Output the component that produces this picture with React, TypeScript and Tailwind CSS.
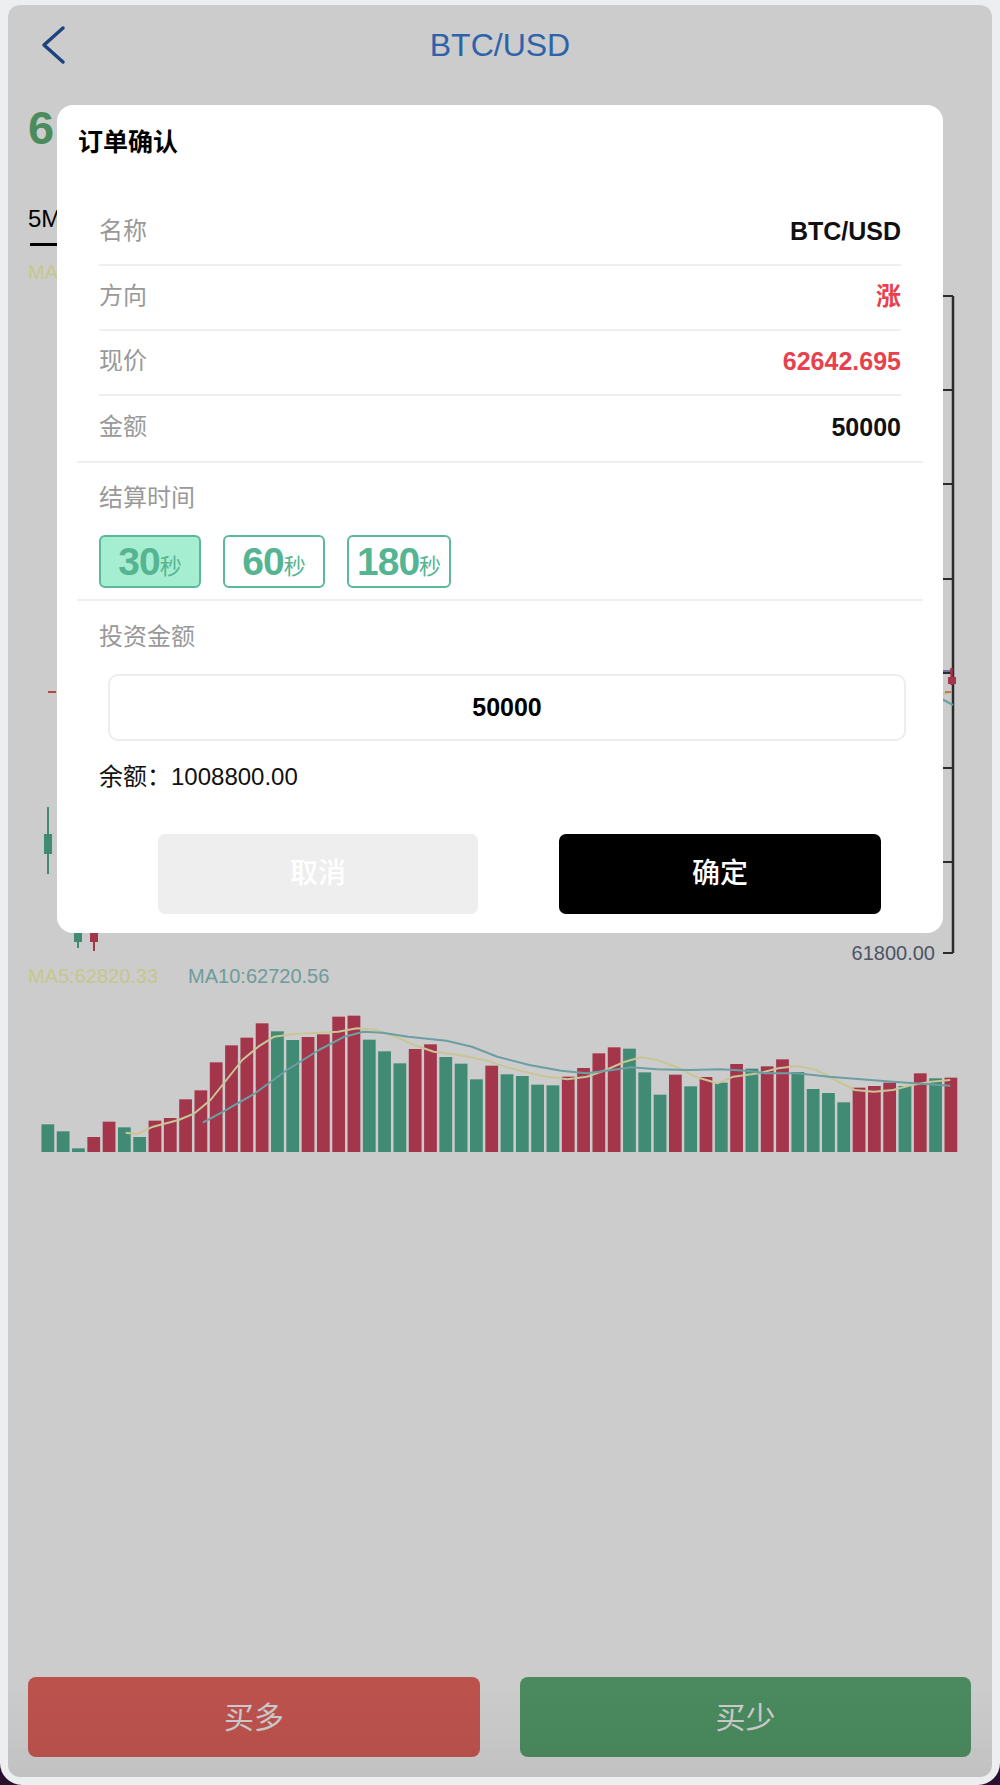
import React from "react";

const font = "font-['Liberation_Sans','Noto_Sans_CJK_SC',sans-serif]";

const RED = "#ce445f";
const GREEN = "#52ad91";

// volume bars: height (in 1/3 px) and colour
const bars: [number, "r" | "g"][] = [
  [83, "g"], [62, "g"], [11, "g"], [45, "r"], [91, "r"], [74, "g"], [45, "g"], [94, "r"], [102, "r"], [158, "r"],
  [185, "r"], [269, "r"], [320, "r"], [343, "r"], [386, "r"], [362, "g"], [336, "g"], [345, "r"], [353, "r"], [406, "r"],
  [409, "r"], [337, "g"], [302, "g"], [266, "g"], [309, "r"], [323, "r"], [285, "g"], [265, "g"], [218, "g"], [259, "r"],
  [233, "g"], [228, "g"], [202, "g"], [200, "g"], [226, "r"], [252, "r"], [296, "r"], [314, "r"], [310, "g"], [239, "g"],
  [172, "g"], [232, "r"], [197, "g"], [225, "r"], [208, "g"], [264, "r"], [250, "g"], [257, "r"], [278, "r"], [240, "g"],
  [189, "g"], [177, "g"], [149, "g"], [193, "r"], [198, "r"], [208, "r"], [198, "g"], [236, "r"], [221, "g"], [223, "r"],
];

const ma5 = [
  [197, 578], [215, 582], [240, 560], [280, 540], [305, 520], [330, 480], [355, 420], [380, 360], [405, 320], [430, 290],
  [460, 282], [500, 278], [530, 275], [560, 265], [590, 270], [620, 290], [650, 315], [680, 335], [720, 345], [760, 360],
  [800, 385], [850, 408], [890, 418], [920, 410], [950, 390], [980, 365], [1005, 352], [1030, 360], [1060, 380], [1090, 410],
  [1125, 430], [1150, 410], [1190, 400], [1220, 385], [1250, 378], [1280, 390], [1310, 420], [1340, 450], [1370, 455],
  [1400, 450], [1430, 435], [1460, 425], [1490, 420],
];

const ma10 = [
  [318, 548], [350, 515], [400, 460], [450, 390], [500, 330], [540, 290], [570, 275], [600, 278], [640, 290], [700, 302],
  [740, 320], [780, 350], [830, 375], [880, 392], [920, 400], [960, 390], [990, 382], [1030, 388], [1080, 390], [1130, 388],
  [1170, 392], [1200, 400], [1250, 400], [1300, 410], [1350, 418], [1400, 425], [1450, 432], [1490, 437],
];

const ticks = [11, 105, 199, 294, 388, 483, 577, 668];
const tickLabels = ["62500.00", "62400.00", "62300.00", "62200.00", "62100.00", "62000.00", "61900.00", "61800.00"];

function toPoints(pts: number[][]) {
  return pts.map(([x, y]) => `${(x / 1.568 - 8).toFixed(1)},${(y / 3 - 50).toFixed(1)}`).join(" ");
}

function CandleChart() {
  return (
    <svg width="984" height="680" className={`block ${font}`}>
      {/* price axis */}
      <line x1="945" y1="11" x2="945" y2="668" stroke="#363636" strokeWidth="2.5" />
      {ticks.map((y, i) => (
        <g key={y}>
          <line x1="935" y1={y} x2="945" y2={y} stroke="#363636" strokeWidth="2" />
          <text x="927" y={y + 7} textAnchor="end" fontSize="20" fill="#606a80">
            {tickLabels[i]}
          </text>
        </g>
      ))}
      {/* candles */}
      <line x1="40" y1="522" x2="40" y2="589" stroke={GREEN} strokeWidth="2" />
      <rect x="36" y="549" width="8" height="20" fill={GREEN} />
      <rect x="40" y="406" width="8" height="2" fill="#e05a4a" />
      <line x1="70" y1="615" x2="70" y2="663" stroke={GREEN} strokeWidth="2" />
      <rect x="66" y="615" width="8" height="42" fill={GREEN} />
      <line x1="86" y1="625" x2="86" y2="666" stroke={RED} strokeWidth="2" />
      <rect x="82" y="625" width="8" height="32" fill={RED} />
      {/* latest price marks */}
      <line x1="930" y1="386" x2="944" y2="386" stroke="#9889c0" strokeWidth="2" />
      <polyline points="930,410 943,407" fill="none" stroke="#f3f1b0" strokeWidth="2" />
      <line x1="937" y1="407" x2="943" y2="407" stroke="#f07a4a" strokeWidth="1.5" />
      <polyline points="930,412 945,420" fill="none" stroke="#86c7cc" strokeWidth="2" />
      <line x1="943.5" y1="383" x2="943.5" y2="400" stroke={RED} strokeWidth="2.5" />
      <rect x="940" y="392" width="8" height="7" fill={RED} />
    </svg>
  );
}

function VolumeChart() {
  return (
    <svg width="984" height="170" className="block">
      {bars.map(([h, c], i) => (
        <rect
          key={i}
          x={33.45 + i * 15.306}
          y={162 - h / 3}
          width={12.76}
          height={h / 3}
          fill={c === "r" ? RED : GREEN}
        />
      ))}
      <polyline points={toPoints(ma5)} fill="none" stroke="#fbf7bd" strokeWidth="2" strokeLinejoin="round" />
      <polyline points={toPoints(ma10)} fill="none" stroke="#86c7cc" strokeWidth="2" strokeLinejoin="round" />
    </svg>
  );
}

function InfoRow({ label, value, valueClass, last }: { label: string; value: string; valueClass: string; last?: boolean }) {
  return (
    <div className={`flex h-[65px] items-center justify-between pb-[4px] ${last ? "" : "border-b-2 border-[#efefef]"}`}>
      <span className="text-[24px] leading-[34px] text-[#999999]">{label}</span>
      <span className={`text-[25px] leading-[34px] font-semibold ${valueClass}`}>{value}</span>
    </div>
  );
}

function TimeOption({ sec, active }: { sec: string; active?: boolean }) {
  return (
    <button
      type="button"
      className={`inline-flex h-[53px] min-w-[102px] items-center justify-center rounded-[6px] border-2 border-[#5bb898] px-[8px] text-[#55b492] ${
        active ? "bg-[#a6eed1]" : "bg-white"
      }`}
    >
      <span className="text-[39px] leading-none font-bold tracking-[-1px]">{sec}</span>
      <span className="mt-[10px] text-[22px] leading-none">秒</span>
    </button>
  );
}

function OrderDialog() {
  return (
    <div className="w-[886px] rounded-[16px] bg-white pb-[19px]">
      <div className="h-[96px] pl-[21px] pt-[20px]">
        <h2 className="text-[25px] leading-[34px] font-semibold text-black">订单确认</h2>
      </div>
      <div className="mx-[20px] border-b-2 border-[#efefef] px-[22px]">
        <InfoRow label="名称" value="BTC/USD" valueClass="text-[#111111]" />
        <InfoRow label="方向" value="涨" valueClass="text-[#e8414d]" />
        <InfoRow label="现价" value="62642.695" valueClass="text-[#e8414d]" />
        <InfoRow label="金额" value="50000" valueClass="text-[#111111]" last />
      </div>
      <div className="mx-[20px] border-b-2 border-[#efefef] px-[22px] pt-[18px] pb-[11px]">
        <p className="text-[24px] leading-[34px] text-[#999999]">结算时间</p>
        <div className="mt-[20px] flex gap-[22px]">
          <TimeOption sec="30" active />
          <TimeOption sec="60" />
          <TimeOption sec="180" />
        </div>
      </div>
      <div className="mx-[20px] pt-[19px]">
        <p className="px-[22px] text-[24px] leading-[34px] text-[#999999]">投资金额</p>
        <div className="mt-[20px] ml-[31px] mr-[17px] flex h-[67px] items-center justify-center rounded-[10px] border-2 border-[#ededed]">
          <span className="text-[25px] font-bold text-black">50000</span>
        </div>
        <p className="mt-[19px] px-[22px] text-[24px] leading-[34px] text-[#111111]">余额：1008800.00</p>
      </div>
      <div className="mt-[40px] flex gap-[81px] pl-[101px]">
        <button type="button" className="h-[80px] w-[320px] rounded-[7px] bg-[#eeeeee] text-[28px] font-medium text-white">
          取消
        </button>
        <button type="button" className="h-[80px] w-[322px] rounded-[7px] bg-black text-[28px] font-medium text-white">
          确定
        </button>
      </div>
    </div>
  );
}

export default function App() {
  return (
    <div className={`h-[1785px] w-[1000px] bg-[#2a1030] ${font}`}>
      <div className="h-full rounded-b-[22px] bg-[#eceef0] px-[8px] pt-[5px]">
        <div className="relative flex h-[1772px] flex-col overflow-hidden rounded-[12px] bg-white">
          {/* header */}
          <header className="relative flex h-[79px] shrink-0 items-center justify-center">
            <svg className="absolute left-[33px] top-[20px]" width="26" height="40" viewBox="0 0 26 40">
              <polyline points="22,3 3,20 22,37" fill="none" stroke="#27549f" strokeWidth="3.5" strokeLinecap="round" strokeLinejoin="round" />
            </svg>
            <h1 className="text-[32px] leading-[32px] text-[#3a7bd5]">BTC/USD</h1>
          </header>

          {/* price */}
          <div className="mt-[20px] flex items-start pl-[20px]">
            <span className="text-[47px] leading-[48px] font-bold tracking-[3px] text-[#5daf73]">62642.695</span>
            <div className="mt-[2px] ml-[10px] flex text-[20px] leading-[20px] text-[#444444]">
              <span className="w-[125px]">高</span>
              <span className="w-[138px]">62800.00</span>
              <span>62500.00</span>
            </div>
          </div>

          {/* periods */}
          <div className="mt-[55px] flex gap-[40px] pl-[20px] text-[24px] leading-[24px]">
            <div>
              <span className="text-black">5M</span>
              <div className="ml-[2px] mt-[12px] h-[3px] w-[40px] bg-black" />
            </div>
            <span className="text-[#333333]">15M</span>
            <span className="text-[#333333]">30M</span>
            <span className="text-[#333333]">1H</span>
          </div>

          <div className="mt-[16px] flex gap-[30px] pl-[20px] text-[20px] leading-[20px]">
            <span className="text-[#f6fbb0]">MA5:62820.33</span>
            <span className="text-[#8ac3c3]">MA10:62720.56</span>
          </div>

          <div className="mt-[3px]">
            <CandleChart />
          </div>

          <div className="mt-[1px] flex gap-[30px] pl-[20px] text-[20px] leading-[20px]">
            <span className="text-[#f6fbb0]">MA5:62820.33</span>
            <span className="text-[#8ac3c3]">MA10:62720.56</span>
          </div>

          <div className="mt-[4px]">
            <VolumeChart />
          </div>

          {/* bottom actions */}
          <div className="mt-auto flex gap-[40px] px-[20px] pb-[20px]">
            <button type="button" className="h-[80px] w-[452px] rounded-[8px] bg-[#ec6760] text-[30px] text-white">
              买多
            </button>
            <button type="button" className="h-[80px] w-[451px] rounded-[8px] bg-[#5dad76] text-[30px] text-white">
              买少
            </button>
          </div>

          <div className="pointer-events-none absolute inset-x-0 bottom-0 h-[90px] bg-gradient-to-b from-transparent to-black/5" />

          {/* modal */}
          <div className="absolute inset-0 flex justify-center bg-black/20 pt-[100px]">
            <div className="h-fit">
              <OrderDialog />
            </div>
          </div>
        </div>
      </div>
    </div>
  );
}
